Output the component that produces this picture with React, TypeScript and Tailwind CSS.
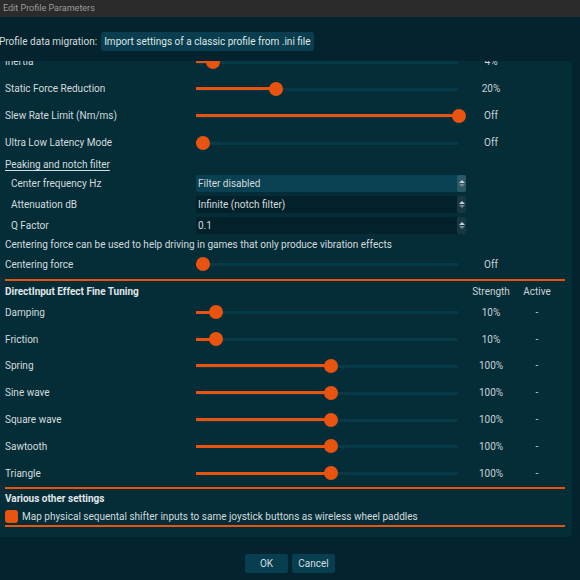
import type { ReactNode } from "react";

const font = { fontFamily: '"Roboto", "Liberation Sans", sans-serif' };

type SliderRow = { label: string; pos: number; value: string; active?: string };

const topSliders: SliderRow[] = [
  { label: "Inertia", pos: 17, value: "4%" },
  { label: "Static Force Reduction", pos: 80, value: "20%" },
  { label: "Slew Rate Limit (Nm/ms)", pos: 263, value: "Off" },
  { label: "Ultra Low Latency Mode", pos: 7, value: "Off" },
];

const effects: SliderRow[] = [
  { label: "Damping", pos: 20, value: "10%", active: "-" },
  { label: "Friction", pos: 20, value: "10%", active: "-" },
  { label: "Spring", pos: 135, value: "100%", active: "-" },
  { label: "Sine wave", pos: 135, value: "100%", active: "-" },
  { label: "Square wave", pos: 135, value: "100%", active: "-" },
  { label: "Sawtooth", pos: 135, value: "100%", active: "-" },
  { label: "Triangle", pos: 135, value: "100%", active: "-" },
];

function Slider({ pos }: { pos: number }) {
  return (
    <div className="relative h-[14px] w-[270px] shrink-0">
      <div className="absolute left-0 right-[8px] top-[6px] h-[3px] bg-[#063a48]" />
      <div className="absolute left-0 top-[5.5px] h-[3px] bg-[#e8530f]" style={{ width: pos }} />
      <div
        className="absolute top-0 h-[14px] w-[14px] rounded-full bg-[#e8530f]"
        style={{ left: pos - 7 }}
      />
    </div>
  );
}

function Row({ row, h = "h-[27px]" }: { row: SliderRow; h?: string }) {
  return (
    <div className={`flex ${h} items-center`}>
      <div className="w-[191px] shrink-0">{row.label}</div>
      <Slider pos={row.pos} />
      <div className="w-[50px] shrink-0 text-center text-[#c9d2d5]">{row.value}</div>
      <div className="w-[42px] shrink-0 text-center text-[#c9d2d5]">{row.active ?? ""}</div>
    </div>
  );
}

function SpinBox({ label, value, hi }: { label: string; value: string; hi?: boolean }) {
  return (
    <div className="flex h-[21px] items-center">
      <div className="w-[191px] shrink-0 pl-[6px]">{label}</div>
      <div
        className={`flex h-[17px] w-[270px] items-center justify-between rounded-[2px] pl-[2px] ${
          hi ? "bg-[#0a4152]" : "bg-[#03212a]"
        }`}
      >
        <span>{value}</span>
        <div
          className={`flex h-[17px] w-[9px] flex-col items-center justify-center gap-[1px] rounded-[2px] ${
            hi ? "bg-[#2a5866]" : "bg-[#173842]"
          }`}
        >
          <div className="h-0 w-0 border-x-[3px] border-b-[3px] border-x-transparent border-b-[#c8d0d3]" />
          <div className="h-0 w-0 border-x-[3px] border-t-[3px] border-x-transparent border-t-[#6f8a92]" />
        </div>
      </div>
    </div>
  );
}

function Separator({ className = "" }: { className?: string }) {
  return <div className={`h-[2px] w-[560px] bg-[#e8530f] ${className}`} />;
}

function Btn({ children }: { children: ReactNode }) {
  return (
    <div className="flex h-[19px] w-[43px] items-center justify-center rounded-[2px] bg-[#073f50] text-[#d6dee0]">
      {children}
    </div>
  );
}

export default function App() {
  return (
    <div
      className="flex h-[580px] w-[580px] flex-col overflow-hidden bg-[#03242e] text-[10px] text-[#d3dbde]"
      style={font}
    >
      <div className="flex h-[17px] shrink-0 items-center bg-[#2b2b2b] pl-[3px] text-[9px] text-[#9c9c9c]">
        Edit Profile Parameters
      </div>

      <div className="mt-[15px] -ml-[1px] flex h-[19px] items-center gap-[4px]">
        <span>Profile data migration:</span>
        <div className="flex h-[19px] items-center rounded-[2px] bg-[#0a3d4d] px-[3px] text-[#dfe6e8]">
          Import settings of a classic profile from .ini file
        </div>
      </div>

      <div className="mt-[10px] h-[476px] w-[573px] shrink-0 overflow-hidden rounded-br-[3px] border-r border-[#03212a] bg-[#052d38] pl-[5px]">
        <div className="-mt-[13px] flex flex-col">
          {topSliders.map((r) => (
            <Row key={r.label} row={r} />
          ))}

          <div className="flex h-[17px] items-center">
            <span className="underline underline-offset-2">Peaking and notch filter</span>
          </div>
          <SpinBox label="Center frequency Hz" value="Filter disabled" hi />
          <SpinBox label="Attenuation dB" value="Infinite (notch filter)" />
          <SpinBox label="Q Factor" value="0.1" />

          <div className="flex h-[16px] items-center">
            Centering force can be used to help driving in games that only produce vibration effects
          </div>
          <Row row={{ label: "Centering force", pos: 7, value: "Off" }} h="h-[24px]" />

          <Separator className="mt-[3px]" />
          <div className="flex h-[18px] items-end font-bold text-[#e0e6e8]">
            <div className="w-[461px] shrink-0">DirectInput Effect Fine Tuning</div>
            <div className="w-[50px] shrink-0 text-center font-normal text-[#c9d2d5]">Strength</div>
            <div className="w-[42px] shrink-0 text-center font-normal text-[#c9d2d5]">Active</div>
          </div>
          {effects.map((r) => (
            <Row key={r.label} row={r} h="h-[26.8px]" />
          ))}

          <Separator />
          <div className="flex h-[20px] items-center font-bold text-[#e0e6e8]">Various other settings</div>
          <div className="flex h-[15px] items-center gap-[4px]">
            <div className="h-[13px] w-[13px] rounded-[3px] bg-[#e8530f]" />
            <span>Map physical sequental shifter inputs to same joystick buttons as wireless wheel paddles</span>
          </div>
          <Separator className="mt-[1px]" />
        </div>
      </div>

      <div className="mt-[17px] flex justify-center gap-[4px]">
        <Btn>OK</Btn>
        <Btn>Cancel</Btn>
      </div>
    </div>
  );
}
